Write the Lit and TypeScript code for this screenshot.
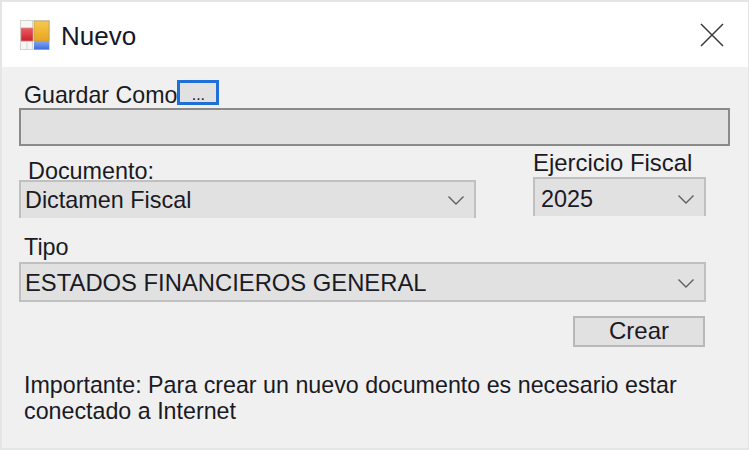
import {LitElement, html, css} from 'lit';
import {customElement} from 'lit/decorators.js';

const chevron = html`<svg class="chevron" width="18" height="11" viewBox="0 0 18 11">
  <path d="M1.5 1.5 L9 9 L16.5 1.5" fill="none" stroke="#5f5f5f" stroke-width="1.4" />
</svg>`;

@customElement('app-root')
export class AppRoot extends LitElement {
  static styles = css`
    :host {
      display: block;
      width: 749px;
      height: 450px;
      font-family: 'Liberation Sans', Arial, sans-serif;
      font-size: 23.4px;
      color: #1a1a24;
    }

    .window {
      box-sizing: border-box;
      width: 749px;
      height: 450px;
      border: 2px solid #e4e6e6;
      border-right-width: 1px;
      background: #f0f0f0;
      display: flex;
      flex-direction: column;
    }

    .titlebar {
      height: 65px;
      flex: none;
      background: #fff;
      display: flex;
      align-items: center;
      padding: 0 24px 0 17px;
    }

    .titlebar .logo {
      margin-right: 10px;
      filter: blur(0.4px);
    }

    .title {
      font-size: 26px;
      flex: 1;
      color: #14182a;
      padding-top: 3px;
    }

    .content {
      padding: 13px 18px 0 17px;
      display: flex;
      flex-direction: column;
    }

    .save-row {
      display: flex;
      height: 28px;
      padding-left: 5px;
      line-height: 31px;
      font-size: 23.2px;
    }

    .browse {
      box-sizing: border-box;
      width: 42px;
      height: 25px;
      border: 3px solid #1f6fd6;
      background: #e1e1e1;
      font-size: 16px;
      line-height: 24px;
      text-align: center;
    }

    .path {
      box-sizing: border-box;
      width: 711px;
      height: 38px;
      border: 2px solid #8a8a8a;
      background: #e1e1e1;
    }

    .doc-row {
      display: flex;
      margin-top: 16px;
    }

    .doc-col {
      width: 457px;
      margin-right: 57px;
    }

    .year-col {
      width: 173px;
    }

    .doc-label {
      height: 17px;
      padding: 0 0 0 9px;
      margin-top: 1px;
      line-height: 16px;
    }

    .year-label {
      height: 16px;
      padding-left: 0;
      line-height: 2px;
      font-size: 23.9px;
    }

    .select {
      box-sizing: border-box;
      display: flex;
      align-items: center;
      justify-content: space-between;
      background: #e1e1e1;
      border: 2px solid #c0c0c0;
      padding: 0 9px 0 4px;
    }

    .select.open-bottom {
      border-bottom: none;
      height: 38px;
      margin-top: 0;
    }

    .year-col .select {
      height: 39px;
      margin-top: -1px;
      padding-left: 6px;
      padding-top: 3px;
    }

    .tipo-label {
      margin-top: 16px;
      padding-left: 5px;
      height: 28px;
      line-height: 26px;
    }

    .tipo {
      width: 687px;
      height: 40px;
      font-size: 23.8px;
      padding-top: 2px;
    }

    .actions {
      width: 686px;
      margin-top: 14px;
      display: flex;
      justify-content: flex-end;
    }

    .crear {
      box-sizing: border-box;
      width: 132px;
      height: 31px;
      border: 2px solid #b8b8b8;
      background: #e1e1e1;
      text-align: center;
      line-height: 26px;
      font-size: 24px;
    }

    .note {
      margin: 25px 0 0 5px;
      line-height: 26px;
      font-size: 23.25px;
    }
  `;

  render() {
    return html`<div class="window">
      <div class="titlebar">
        <svg class="logo" width="32" height="32" viewBox="0 0 32 32">
          <defs>
            <linearGradient id="gold" x1="0" y1="0" x2="0" y2="1">
              <stop offset="0" stop-color="#f6c94e" />
              <stop offset="1" stop-color="#eaa41c" />
            </linearGradient>
            <linearGradient id="blue" x1="0" y1="0" x2="0" y2="1">
              <stop offset="0" stop-color="#86a8f2" />
              <stop offset="1" stop-color="#3f6cdc" />
            </linearGradient>
            <linearGradient id="red" x1="0" y1="0" x2="0" y2="1">
              <stop offset="0" stop-color="#ee5a60" />
              <stop offset="1" stop-color="#c9222c" />
            </linearGradient>
          </defs>
          <rect x="1.5" y="1.5" width="29" height="29" fill="#f7f6f4" stroke="#d6d4d0" />
          <path d="M2 9H13 M2 22.5H13 M8 22V30 M13.5 2V30" stroke="#d8d6d4" fill="none" />
          <rect x="2" y="9" width="12" height="13" fill="url(#red)" stroke="#b8a8a8" stroke-width="0.6" />
          <rect x="15" y="2" width="15" height="20" fill="url(#gold)" stroke="#b09a60" stroke-width="0.6" />
          <rect x="15" y="22" width="15" height="8.5" fill="url(#blue)" />
        </svg>
        <span class="title">Nuevo</span>
        <svg width="24" height="24" viewBox="0 0 24 24">
          <path d="M1 1 L23 23 M23 1 L1 23" stroke="#3a3a3a" stroke-width="1.5" fill="none" />
        </svg>
      </div>
      <div class="content">
        <div class="save-row">
          <span>Guardar Como</span>
          <div class="browse">...</div>
        </div>
        <div class="path"></div>
        <div class="doc-row">
          <div class="doc-col">
            <div class="doc-label">Documento:</div>
            <div class="select open-bottom">Dictamen Fiscal ${chevron}</div>
          </div>
          <div class="year-col">
            <div class="year-label">Ejercicio Fiscal</div>
            <div class="select open-bottom">2025 ${chevron}</div>
          </div>
        </div>
        <div class="tipo-label">Tipo</div>
        <div class="select tipo">ESTADOS FINANCIEROS GENERAL ${chevron}</div>
        <div class="actions"><div class="crear">Crear</div></div>
        <div class="note">
          Importante: Para crear un nuevo documento es necesario estar<br />conectado a Internet
        </div>
      </div>
    </div>`;
  }
}
